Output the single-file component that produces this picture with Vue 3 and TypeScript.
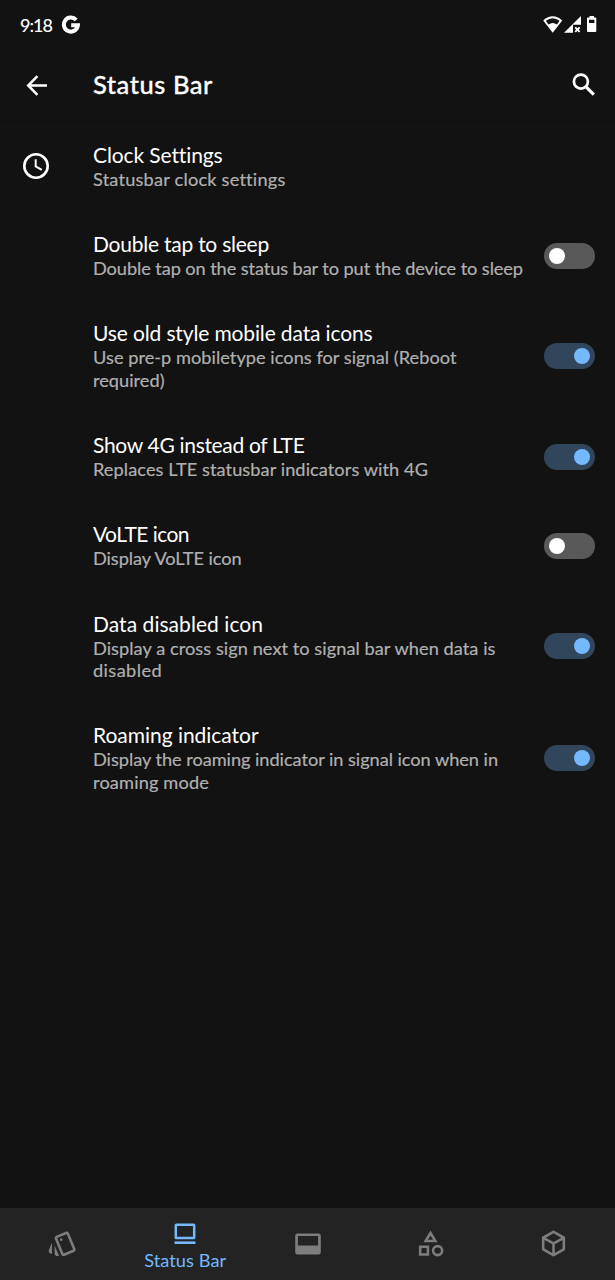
<script setup lang="ts">
import type { Directive } from 'vue'

interface Line { text: string; width: number }
interface Setting { title: Line; summary: Line[]; icon?: boolean; on?: boolean }

// Tracks a single line of text out or in so that it spans the given width.
const vFit: Directive<HTMLElement, number> = {
  mounted(el, binding) {
    const natural = el.getBoundingClientRect().width
    const count = (el.textContent ?? '').length
    el.style.letterSpacing = `${((binding.value - natural) / count).toFixed(3)}px`
  },
}

const settings: Setting[] = [
  { title: { text: 'Clock Settings', width: 129 }, summary: [{ text: 'Statusbar clock settings', width: 192 }], icon: true },
  { title: { text: 'Double tap to sleep', width: 176 }, summary: [{ text: 'Double tap on the status bar to put the device to sleep', width: 430 }], on: false },
  {
    title: { text: 'Use old style mobile data icons', width: 279.5 },
    summary: [{ text: 'Use pre-p mobiletype icons for signal (Reboot', width: 363.5 }, { text: 'required)', width: 71.5 }],
    on: true,
  },
  { title: { text: 'Show 4G instead of LTE', width: 211.5 }, summary: [{ text: 'Replaces LTE statusbar indicators with 4G', width: 335 }], on: true },
  { title: { text: 'VoLTE icon', width: 96 }, summary: [{ text: 'Display VoLTE icon', width: 148.5 }], on: false },
  {
    title: { text: 'Data disabled icon', width: 170 },
    summary: [{ text: 'Display a cross sign next to signal bar when data is', width: 402.5 }, { text: 'disabled', width: 69 }],
    on: true,
  },
  {
    title: { text: 'Roaming indicator', width: 165.5 },
    summary: [{ text: 'Display the roaming indicator in signal icon when in', width: 405 }, { text: 'roaming mode', width: 116 }],
    on: true,
  },
]
</script>

<template>
  <div class="screen">
    <div class="statusbar">
      <span class="time"><span v-fit="32" class="fit">9:18</span></span>
      <svg class="google" viewBox="61 14 20 21" width="20" height="21">
        <path d="M76.2 20A7 7 0 1 0 77.9 25.2H71.2" fill="none" stroke="#fff" stroke-width="4" />
      </svg>
      <svg class="indicators" viewBox="540 14 60 22" width="60" height="22" fill="#fff">
        <path fill-rule="evenodd" d="M552.7 32.8L543.2 20.5Q552.7 12.1 562.2 20.5ZM545.9 20.8L548.4 24.4Q552.7 21.4 557 24.4L559.5 20.8Q552.7 15.5 545.9 20.8Z" />
        <path d="M564 32.8L581 16V24.8H573V32.8Z" />
        <path d="M575.2 27.4L579.6 31.9M579.6 27.4L575.2 31.9" stroke="#fff" stroke-width="1.9" />
        <path fill-rule="evenodd" d="M589.5 16H594V17.4H595.3Q596.3 17.4 596.3 18.4V31Q596.3 32 595.3 32H588Q587 32 587 31V18.4Q587 17.4 588 17.4H589.5ZM589 19.7V23H594.4V19.7Z" />
      </svg>
    </div>

    <header class="toolbar">
      <svg class="back" viewBox="24 73 25 25" width="25" height="25" fill="none" stroke="#fff" stroke-width="2.5">
        <path d="M47 85.5H28.5M37.4 76.2L28.2 85.5L37.4 94.8" />
      </svg>
      <h1><span v-fit="120" class="fit">Status Bar</span></h1>
      <svg class="search" viewBox="570 72 27 27" width="27" height="27" fill="none" stroke="#fff">
        <circle cx="580.9" cy="81.6" r="7" stroke-width="2.7" />
        <path d="M585.8 86.6L593.8 94.6" stroke-width="3.2" />
      </svg>
    </header>

    <main>
      <section v-for="s in settings" :key="s.title.text" class="row">
        <div class="lead">
          <svg v-if="s.icon" viewBox="0 0 28 28" width="28" height="28" fill="none" stroke="#fff" stroke-width="2.6">
            <circle cx="14" cy="14" r="11.7" />
            <path d="M13.7 7.2V14.3L19.8 17.8" stroke-width="2" />
          </svg>
        </div>
        <div class="text">
          <div class="title"><span v-fit="s.title.width" class="fit">{{ s.title.text }}</span></div>
          <div v-for="line in s.summary" :key="line.text" class="summary">
            <span v-fit="line.width" class="fit">{{ line.text }}</span>
          </div>
        </div>
        <div v-if="s.on !== undefined" class="toggle" :class="{ on: s.on }"><i class="thumb"></i></div>
      </section>
    </main>

    <nav>
      <div class="tab">
        <svg viewBox="0 0 24 24" width="31" height="31" fill="currentColor">
          <path d="M2.53 19.65l1.34.56v-9.03l-2.43 5.86c-.41 1.02.08 2.19 1.09 2.61zm19.5-3.7L17.07 3.98c-.31-.75-1.04-1.21-1.81-1.23-.26 0-.53.04-.79.15L7.1 5.95c-.75.31-1.21 1.03-1.23 1.8-.01.27.04.54.15.8l4.96 11.97c.31.76 1.05 1.22 1.83 1.23.26 0 .52-.05.77-.15l7.36-3.05c1.02-.42 1.51-1.59 1.09-2.6zm-9.2 3.8L7.87 7.79l7.35-3.04h.01l4.95 11.95-7.35 3.05z" />
          <circle cx="11" cy="9" r="1" />
          <path d="M5.88 19.75c0 1.1.9 2 2 2h1.45l-3.45-8.34v6.34z" />
        </svg>
      </div>
      <div class="tab active">
        <svg viewBox="0 0 22 22" width="22" height="22">
          <rect x="1.8" y="1.8" width="18.4" height="13.2" rx=".6" fill="none" stroke="currentColor" stroke-width="2.5" />
          <path d="M.5 18.4H21.5V21H.5Z" fill="currentColor" />
        </svg>
        <span class="label"><span v-fit="82" class="fit">Status Bar</span></span>
      </div>
      <div class="tab">
        <svg viewBox="0 0 26 22" width="26" height="22" fill="currentColor">
          <path fill-rule="evenodd" d="M2.5 .5H23.5Q25.8 .5 25.8 2.8V19.2Q25.8 21.5 23.5 21.5H2.5Q.2 21.5 .2 19.2V2.8Q.2 .5 2.5 .5ZM2.9 3.1V12.5H23.1V3.1Z" />
        </svg>
      </div>
      <div class="tab">
        <svg viewBox="0 0 24 24" width="31" height="31" fill="currentColor">
          <path fill-rule="evenodd" d="M12 2L6.5 11H17.5ZM12 5.84L13.93 9H10.06ZM17.5 13A4.5 4.5 0 1 0 17.5 22A4.5 4.5 0 1 0 17.5 13ZM17.5 15A2.5 2.5 0 1 1 17.5 20A2.5 2.5 0 1 1 17.5 15ZM3 21.5H11V13.5H3ZM5 15.5H9V19.5H5Z" />
        </svg>
      </div>
      <div class="tab">
        <svg viewBox="0 0 24 24" width="31" height="31" fill="currentColor">
          <path d="M21,16.5C21,16.88 20.79,17.21 20.47,17.38L12.57,21.82C12.41,21.94 12.21,22 12,22C11.79,22 11.59,21.94 11.43,21.82L3.53,17.38C3.21,17.21 3,16.88 3,16.5V7.5C3,7.12 3.21,6.79 3.53,6.62L11.43,2.18C11.59,2.06 11.79,2 12,2C12.21,2 12.41,2.06 12.57,2.18L20.47,6.62C20.79,6.79 21,7.12 21,7.5V16.5M12,4.15L6.04,7.5L12,10.85L17.96,7.5L12,4.15M5,15.91L11,19.29V12.58L5,9.21V15.91M19,15.91V9.21L13,12.58V19.29L19,15.91Z" />
        </svg>
      </div>
    </nav>
  </div>
</template>

<style>
body {
  background: #121212;
}
</style>

<style scoped>
.screen {
  display: flex;
  flex-direction: column;
  width: 615px;
  height: 1280px;
  box-sizing: border-box;
  overflow: hidden;
  background: #121212;
  color: #fff;
  font-family: Lato, "Liberation Sans", sans-serif;
}
svg {
  display: block;
  flex: none;
}
.fit {
  display: inline-block;
  white-space: pre;
}
.statusbar {
  display: flex;
  align-items: center;
  height: 49px;
  padding: 0 15px 0 20px;
  box-sizing: border-box;
}
.time {
  width: 41px;
  font-size: 18px;
  font-weight: 500;
}
.indicators {
  margin: 1px 0 0 auto;
}
.toolbar {
  display: flex;
  align-items: center;
  height: 72.5px;
  padding: 1px 18px 0 24px;
  box-sizing: border-box;
  border-bottom: 1px solid #0f0f0f;
}
h1 {
  margin: -3px 0 0 44px;
  font-size: 25.5px;
  line-height: 30px;
  font-weight: 500;
  -webkit-text-stroke: 0.3px #fff;
}
.back {
  margin-top: 1px;
}
.search {
  margin: 1px 0 0 auto;
}
main {
  flex: 1;
}
.row {
  display: flex;
  align-items: center;
  padding: 20px 20px 20px 22px;
}
.lead {
  width: 71px;
  flex: none;
}
.text {
  flex: 1;
  min-width: 0;
  padding-bottom: 2px;
  margin-bottom: -2px;
  transform: translateY(-1px);
}
.title {
  height: 27px;
  font-size: 21px;
  line-height: 27px;
}
.summary {
  height: 22.35px;
  font-size: 18.2px;
  line-height: 22.35px;
  color: #b0b0b0;
  white-space: nowrap;
  -webkit-text-stroke: 0.2px #b0b0b0;
}
.toggle {
  display: flex;
  flex: none;
  width: 51px;
  height: 26px;
  padding: 5px;
  box-sizing: border-box;
  border-radius: 13px;
  background: #595959;
}
.toggle.on {
  justify-content: flex-end;
  background: #31465a;
}
.thumb {
  width: 16px;
  height: 16px;
  border-radius: 50%;
  background: #fff;
}
.on .thumb {
  background: #74b9ff;
}
nav {
  display: grid;
  grid-template-columns: repeat(5, 1fr);
  height: 72.5px;
  padding-left: 1px;
  background: #232323;
  color: #7d7d7d;
}
.tab {
  display: flex;
  flex-direction: column;
  align-items: center;
  justify-content: center;
}
.tab.active {
  justify-content: flex-start;
  padding-top: 15px;
  color: #74b9ff;
}
.label {
  margin-top: 4px;
  font-size: 18.2px;
  line-height: 22px;
}
</style>
